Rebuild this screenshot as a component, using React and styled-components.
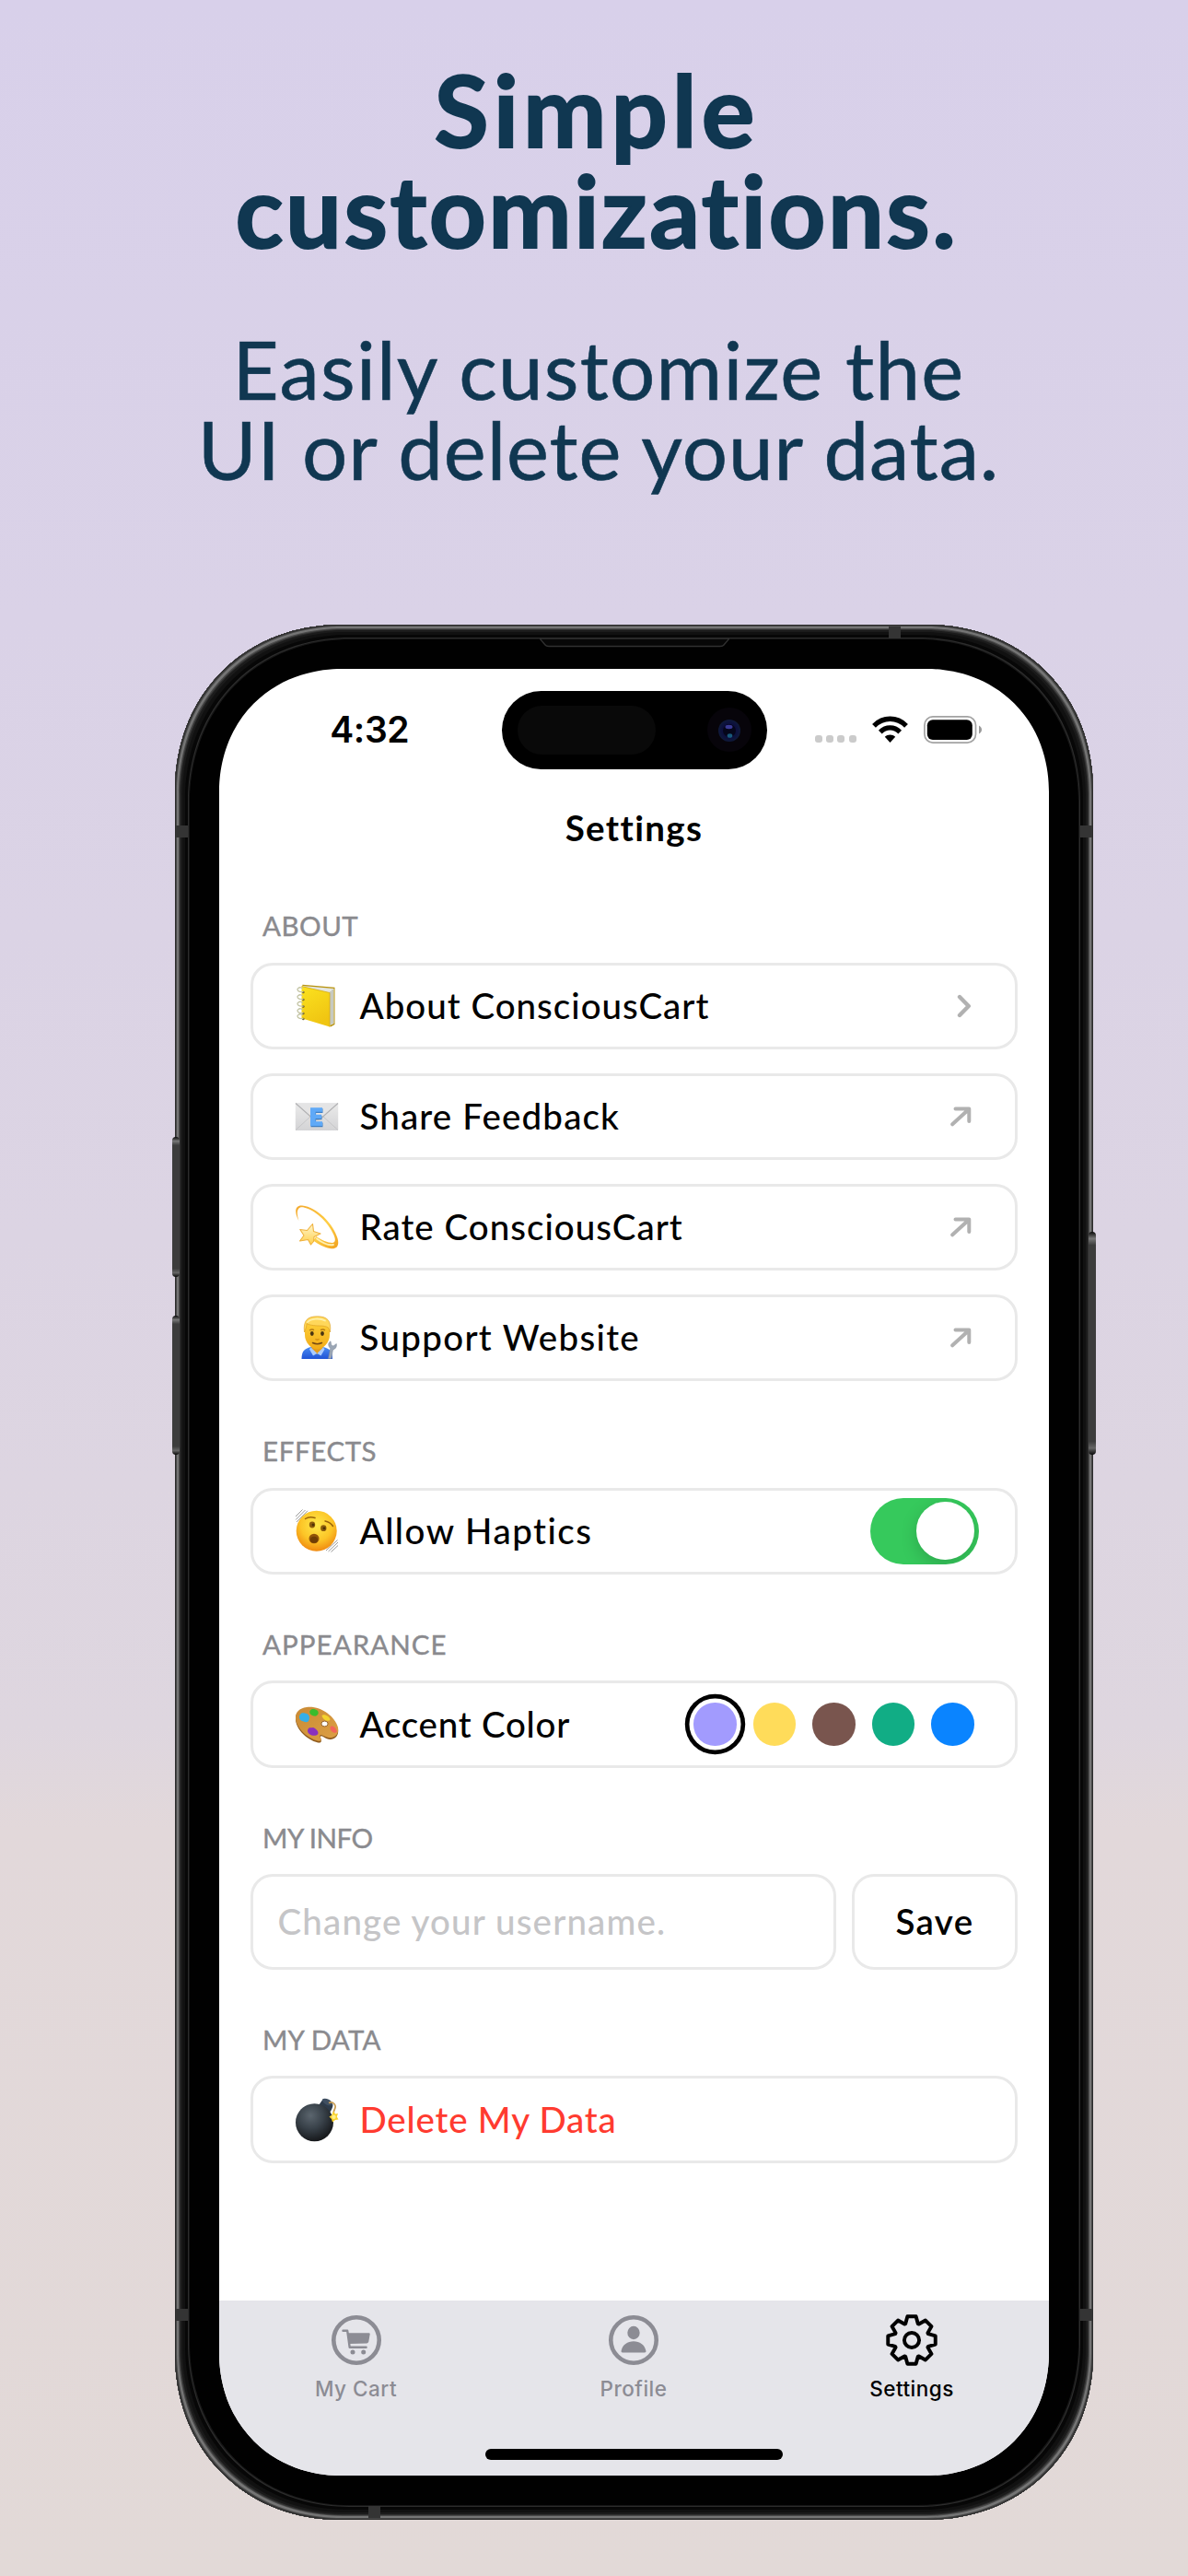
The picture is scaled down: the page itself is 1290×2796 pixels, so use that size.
import React from "react";
import styled, { createGlobalStyle, css } from "styled-components";

const Global = createGlobalStyle`
  * { box-sizing: border-box; }
  body { margin: 0; }
`;

const nunitoLike = css`
  font-family: Lato, "Open Sans", sans-serif;
  font-variant-ligatures: none;
  white-space: nowrap;
`;

/* ---------- page ---------- */

const Page = styled.main`
  width: 1290px;
  height: 2796px;
  overflow: hidden;
  display: flex;
  flex-direction: column;
  background: linear-gradient(180deg, #d8d0ea 0%, #dad2e7 24%, #dcd4e3 48%, #ded6df 67%, #e2d8da 71%, #e2d9d7 100%);
`;

const Promo = styled.header`
  height: 678px;
  padding-top: 63.5px;
  display: flex;
  flex-direction: column;
  align-items: center;
  gap: 75px;
  color: #103751;
`;

const Headline = styled.h1`
  ${nunitoLike}
  margin: 0;
  padding-left: 6px;
  font-size: 108px;
  line-height: 109px;
  font-weight: 700;
  text-align: center;
  -webkit-text-stroke: 2px #103751;
`;

const Subhead = styled.p`
  ${nunitoLike}
  margin: 0;
  padding-left: 10px;
  font-size: 87px;
  line-height: 87px;
  font-weight: 400;
  text-align: center;
  -webkit-text-stroke: 0.6px #103751;
`;

const TextLine = styled.span`
  display: block;
  letter-spacing: ${(p) => p.$track}px;
`;

/* ---------- phone ---------- */

const Phone = styled.section`
  position: relative;
  z-index: 0;
  width: 997px;
  height: 2057px;
  margin-left: 190px;
  padding: 48px;
  border-radius: 180px;
  corner-shape: superellipse(1.06);
  background: #010101;
  box-shadow:
    inset 0 0 0 1px #2d2d2d,
    inset 0 0 0 2px #484848,
    inset 0 0 0 4px #757575,
    inset 0 0 0 5px #4a4a4a,
    inset 0 0 0 6px #303030,
    inset 0 0 0 8px #1b1b1b,
    inset 0 0 0 11px #111111,
    inset 0 0 0 14px #070707,
    inset 0 0 0 15px #2c2c2c,
    inset 0 0 0 16px #161616;
`;

const SideButton = styled.i`
  position: absolute;
  z-index: -1;
  top: ${(p) => p.$top}px;
  ${(p) => (p.$right ? "right: -3px;" : "left: -3px;")}
  width: 8px;
  height: ${(p) => p.$height}px;
  border-radius: 4px;
  background: linear-gradient(180deg, #080808 0, #777 3%, #3c3c3c 6%, #3c3c3c 94%, #666 97%, #080808 100%);
`;

const Antenna = styled.i`
  position: absolute;
  left: ${(p) => p.$x}px;
  top: ${(p) => p.$y}px;
  width: 13px;
  height: 13px;
  background: #343434;
`;

const Speaker = styled.svg`
  position: absolute;
  left: 396px;
  top: 15px;
`;

const Screen = styled.div`
  width: 901px;
  height: 1961px;
  border-radius: 133px;
  corner-shape: superellipse(1.06);
  overflow: hidden;
  background: #fff;
  color: #000;
  display: flex;
  flex-direction: column;
`;

const StatusBar = styled.div`
  height: 131px;
  flex: none;
  display: grid;
  grid-template-columns: 306.5px 288px 1fr;
  align-items: center;
`;

const Clock = styled.time`
  padding-left: 20px;
  text-align: center;
  font: 600 39px/48px Inter, sans-serif;
  letter-spacing: -0.4px;
`;

const Island = styled.div`
  height: 85px;
  margin-top: 1px;
  padding: 0 17px;
  border-radius: 43px;
  background: #000;
  display: flex;
  align-items: center;
  justify-content: space-between;
`;

const Sensor = styled.div`
  width: 150px;
  height: 53px;
  border-radius: 27px;
  background: #090909;
`;

const Indicators = styled.div`
  height: 30px;
  padding-left: 52px;
  display: flex;
  align-items: center;
  gap: 17px;
`;

const Signal = styled.div`
  align-self: flex-end;
  padding-bottom: 1px;
  display: flex;
  gap: 4.4px;
`;

const SignalDot = styled.i`
  width: 8px;
  height: 8px;
  border-radius: 3px;
  background: #cbcbcb;
`;

const NavTitle = styled.h2`
  ${nunitoLike}
  flex: none;
  margin: 0;
  height: 80px;
  font-size: 38.5px;
  line-height: 82px;
  font-weight: 700;
  letter-spacing: 1.35px;
  text-align: center;
`;

const Content = styled.div`
  flex: 1;
  padding: 47px 34px 0;
  display: flex;
  flex-direction: column;
  gap: 55.2px;
`;

const Section = styled.section`
  display: flex;
  flex-direction: column;
  gap: 20.6px;
`;

const SectionLabel = styled.h3`
  ${nunitoLike}
  margin: 0;
  height: 40px;
  padding-left: 13px;
  font-size: 29.5px;
  line-height: 42px;
  font-weight: 400;
  color: #8a8a8e;
  letter-spacing: ${(p) => p.$track}px;
  -webkit-text-stroke: 0.4px #8a8a8e;
`;

const CardStack = styled.div`
  display: flex;
  flex-direction: column;
  gap: 25.8px;
`;

const outlined = css`
  border: 3px solid #e9e9e9;
  border-radius: 24px;
  background: #fff;
`;

const Card = styled.div`
  ${outlined}
  height: 94.2px;
  padding-left: 45px;
  padding-right: ${(p) => p.$end}px;
  display: flex;
  align-items: center;
  gap: 22.5px;
`;

const CardText = styled.span`
  ${nunitoLike}
  flex: 1;
  padding-bottom: 2px;
  font-size: 38.5px;
  line-height: 48px;
  font-weight: 500;
  letter-spacing: ${(p) => p.$track}px;
  color: ${(p) => p.$color || "#000"};
`;

const Toggle = styled.div`
  width: 118px;
  height: 72px;
  padding: 4.7px;
  border-radius: 36px;
  overflow: hidden;
  background: #36c95c;
  display: flex;
  justify-content: flex-end;
`;

const Knob = styled.i`
  width: 62.6px;
  height: 62.6px;
  border-radius: 50%;
  background: #fff;
  box-shadow: 0 6px 18px rgba(0, 0, 0, 0.17);
`;

const Swatches = styled.div`
  display: flex;
  gap: 18px;
`;

const Swatch = styled.i`
  width: 46.5px;
  height: 46.5px;
  border-radius: 50%;
  background: ${(p) => p.$color};
  box-shadow: ${(p) => (p.$active ? "0 0 0 4.5px #fff, 0 0 0 9.2px #000" : "none")};
`;

const InfoRow = styled.div`
  display: flex;
  gap: 17.5px;
`;

const Field = styled.div`
  ${outlined}
  ${nunitoLike}
  width: 635.5px;
  height: 103.2px;
  padding-left: 26.5px;
  font-size: 38.5px;
  line-height: 97px;
  font-weight: 500;
  letter-spacing: 1.15px;
  color: #c5c5c7;
`;

const SaveButton = styled.div`
  ${outlined}
  ${nunitoLike}
  flex: 1;
  height: 103.2px;
  font-size: 38.5px;
  line-height: 96px;
  font-weight: 600;
  letter-spacing: 1.4px;
  text-align: center;
`;

const TabBar = styled.nav`
  flex: none;
  height: 190px;
  background: #e5e5ea;
  display: flex;
  flex-direction: column;
  align-items: center;
`;

const Tabs = styled.div`
  width: 100%;
  height: 161px;
  padding-top: 15px;
  display: grid;
  grid-template-columns: 297px 306px 298px;
  justify-items: center;
`;

const Tab = styled.div`
  display: flex;
  flex-direction: column;
  align-items: center;
  gap: 12px;
  color: ${(p) => (p.$active ? "#000" : "#8c8c94")};
  font: 500 22.5px/25px Inter, sans-serif;
  letter-spacing: 0.5px;
`;

const HomeBar = styled.i`
  width: 323px;
  height: 11.6px;
  border-radius: 6px;
  background: #000;
`;

/* ---------- icons ---------- */

const Glyph = styled.svg.attrs({ viewBox: "0 0 48 48", width: 48, height: 48 })`
  flex: none;
`;

const Notebook = () => (
  <Glyph>
    <defs>
      <linearGradient id="cover" x1="0" y1="0" x2="0.4" y2="1">
        <stop offset="0" stopColor="#fbe21f" />
        <stop offset="1" stopColor="#f0c512" />
      </linearGradient>
    </defs>
    <path d="M8.500 0.800 L43.500 3.800 V44 L39 46.500 L8 4 Z" fill="#b8930f" />
    <path d="M8 2 L42.500 5 V43 L38 45 Z" fill="#e4e6e2" />
    <path d="M39 8 V44 M41 6 V43" stroke="#a3a697" strokeWidth="0.9" />
    <path d="M7.500 2.600 L38 9.500 V46.600 L7.500 37.200 Z" fill="url(#cover)" />
    <path d="M7.500 2.600 L38 9.500 V46.600" fill="none" stroke="#d5ab10" strokeWidth="0.8" />
    {[7, 15, 22.500, 30, 36].map((y) => (
      <g key={y}>
        <circle cx="9.300" cy={y + 2} r="1.300" fill="#6b5a18" />
        <path d={`M9.500 ${y + 1.500} C4 ${y + 2.500} 1.500 ${y - 1} 4 ${y - 2.500} C5.500 ${y - 4} 8 ${y - 3} 8.500 ${y - 2}`} fill="none" stroke="#c3c4a4" strokeWidth="1.300" />
      </g>
    ))}
  </Glyph>
);

const EmailLetter = () => (
  <Glyph>
    <defs>
      <linearGradient id="paper" x1="0" y1="0" x2="0" y2="1">
        <stop offset="0" stopColor="#ebebeb" />
        <stop offset="1" stopColor="#d3d3d5" />
      </linearGradient>
    </defs>
    <rect x="0.800" y="9" width="46.400" height="30" rx="0.800" fill="url(#paper)" />
    <path d="M1 38.600 L17 24 M47 38.600 L31 24" stroke="#c3c3c5" strokeWidth="0.900" />
    <path d="M1 9.500 L19 25.500 Q24 29 29 25.500 L47 9.500" fill="#e4e4e5" stroke="#b1b1b3" strokeWidth="1.100" />
    <path d="M17 14.500 H30 V19.300 H22.600 V22 H29 V26.500 H22.600 V29.700 H30 V34.500 H17 Z" fill="#3e7fc4" transform="translate(0.500 0.700)" />
    <path d="M17 14.300 H30 V18.800 H22.600 V21.800 H29 V26.100 H22.600 V29.300 H30 V33.900 H17 Z" fill="#5fa9f7" />
  </Glyph>
);

const DizzyStar = () => (
  <Glyph>
    <defs>
      <linearGradient id="trail" x1="0" y1="0" x2="1" y2="1">
        <stop offset="0" stopColor="#f3a92f" />
        <stop offset="0.600" stopColor="#ffcf45" />
        <stop offset="1" stopColor="#f0a01e" />
      </linearGradient>
      <linearGradient id="star" x1="0" y1="0" x2="0" y2="1">
        <stop offset="0" stopColor="#fff7cf" />
        <stop offset="1" stopColor="#ffcf4a" />
      </linearGradient>
    </defs>
    <path d="M4.500 17 C-1 7 0.500 0 8 0.500 C24 2 42 20 46.500 36 C49 45 45 48.500 38 47 C32 46 25 42 20 38.500 L23.500 34 C29 38 36 41 40.500 41 C44.500 41 44.500 37 42.500 32.500 C36 18 22 5 9 2.300 C2.500 1.500 1.500 8 4.500 17 Z" fill="url(#trail)" />
    <path d="M24 36.500 C30 41 37 44 42 43" fill="none" stroke="#fff0b0" strokeWidth="1.800" strokeLinecap="round" />
    <path d="M19.500 20.500 L20.500 28.500 L28 31 L21 34.500 L20.500 39.500 L17.500 43 L14.500 37.500 L5.500 39 L10 33 L5.800 26.500 L13.500 27.500 Z" fill="url(#star)" stroke="#efb13c" strokeWidth="1.100" strokeLinejoin="round" />
  </Glyph>
);

const Mechanic = () => (
  <Glyph>
    <defs>
      <linearGradient id="skin" x1="0" y1="0" x2="0" y2="1">
        <stop offset="0" stopColor="#ffd43c" />
        <stop offset="1" stopColor="#f2ac18" />
      </linearGradient>
      <linearGradient id="shirt" x1="0" y1="0" x2="0" y2="1">
        <stop offset="0" stopColor="#4b8df2" />
        <stop offset="1" stopColor="#1f53d6" />
      </linearGradient>
    </defs>
    <path d="M7.500 47 C7.500 38 11 35.500 18 34 H30 C38 35.500 41 38 41 47 Z" fill="url(#shirt)" />
    <path d="M18.500 33 H30 V36 L24.300 42 L18.500 36 Z" fill="#e39c1c" />
    <path d="M17.500 34.500 L24.300 41 L20 43.500 L16 36.500 Z M31 34.500 L24.300 41 L28.500 43.500 L32.500 36.500 Z" fill="#a9cbff" />
    <path d="M11 14 C11 4 17 3 24.500 3 C32 3 38 4 38 14 V21 C38 29 31 36.500 24.500 36.500 C18 36.500 11 29 11 21 Z" fill="url(#skin)" />
    <path d="M10.500 18 C9 5 14 0.800 24.500 0.800 C35 0.800 40 5 38.500 18 L36.500 13 C34 11.500 31 11 27 11 C21 11 15 10 13 8.500 C13 12 12 14 10.500 18 Z" fill="#ffd75a" stroke="#d89b22" strokeWidth="0.600" />
    <path d="M14 7 C17 3.500 27 2 33 5.500" fill="none" stroke="#fff0a6" strokeWidth="1.800" strokeLinecap="round" />
    <path d="M16 16 q3 -1.800 5 -0.300 M28 15.700 q3 -1.500 5 0.300" fill="none" stroke="#b67d14" strokeWidth="1.300" />
    <ellipse cx="18.800" cy="19.500" rx="1.900" ry="2.400" fill="#4a3512" />
    <ellipse cx="30" cy="19.500" rx="1.900" ry="2.400" fill="#4a3512" />
    <path d="M22.500 25.500 q2 1.300 4 0" fill="none" stroke="#c88612" strokeWidth="1.200" />
    <path d="M19.500 29.500 q5 2.500 10 0" fill="none" stroke="#774b13" strokeWidth="1.500" strokeLinecap="round" />
    <path d="M36.500 46.500 L38.700 35.500 C36 33 36 29.500 39 27.800 L39.800 32 L42 33 L45.300 30.500 C46 34 44 36.500 41.500 37 L39.700 46.500 Z" fill="#9ba6b5" stroke="#7d8898" strokeWidth="0.500" />
  </Glyph>
);

const ShakingFace = () => (
  <Glyph>
    <defs>
      <radialGradient id="face" cx="0.500" cy="0.350" r="0.650">
        <stop offset="0" stopColor="#ffe94a" />
        <stop offset="0.600" stopColor="#fcc527" />
        <stop offset="1" stopColor="#f08a10" />
      </radialGradient>
    </defs>
    <path d="M1 8 L8.500 0.500 M1.200 11.500 L11.500 1 M2 14 L14 1.800 M34 45 L46.500 33.500 M36.500 46 L47 36 M39.500 46.500 L47 39.500" stroke="#9b9b9b" strokeWidth="1" />
    <circle cx="23.700" cy="23.700" r="22" fill="url(#face)" />
    <path d="M11.500 10.500 Q16 7.500 22 9.500 M33 13 Q38.500 14 41.500 18.500" fill="none" stroke="#99640a" strokeWidth="1.500" strokeLinecap="round" />
    <ellipse cx="19" cy="17" rx="3.200" ry="3.400" fill="#8d5d0c" />
    <ellipse cx="31.300" cy="20.700" rx="3.200" ry="3.400" fill="#8d5d0c" />
    <circle cx="20" cy="17" r="1.500" fill="#4d3205" />
    <circle cx="32" cy="20.700" r="1.500" fill="#4d3205" />
    <ellipse cx="21" cy="32" rx="5.500" ry="5.300" fill="#915408" />
    <ellipse cx="21" cy="33.300" rx="4" ry="3.500" fill="#6f3d05" />
  </Glyph>
);

const PaintPalette = () => (
  <Glyph>
    <defs>
      <linearGradient id="wood" x1="0" y1="0" x2="1" y2="1">
        <stop offset="0" stopColor="#c98a35" />
        <stop offset="1" stopColor="#dda044" />
      </linearGradient>
    </defs>
    <path d="M13 5.500 C27 3 44 15 47 28 C48.500 36 42 41 35 38.500 C31 37 28.500 34 28 36.500 C27.800 38.500 30 40.500 28 42.500 C24 44.500 5 35 1.500 21 C-0.500 13 3 7 13 5.500 Z" fill="#8f5a1c" transform="translate(0 0.800)" />
    <path d="M13 5 C27 3 44 14.500 47 27 C48.500 35 42 40 35 37.500 C31 36 27.500 33.500 27.500 36 C27.300 38 30 39.500 28 41.500 C24 43.500 5 34 1.500 20 C-0.500 12.500 3 6.500 13 5 Z" fill="url(#wood)" />
    <ellipse cx="32.500" cy="23" rx="3.600" ry="2.900" fill="#fff" stroke="#8a571d" strokeWidth="0.900" />
    <path d="M6 13 C8 10 11 12 13 12 C16 13 17 17 15 20 C12 23 10 20 8 20 C5 19 4 15 6 13 Z" fill="#35aee6" />
    <path d="M16.500 9 C18 6 22 6.500 24.500 8.500 C27.500 11 24.500 15.500 21 14.500 C18 14 15.500 12 16.500 9 Z" fill="#39bc2c" />
    <path d="M29.500 14 C32 12 38 15 38.500 18.500 C37 21.500 30.500 19 29.500 14 Z" fill="#f4d32e" />
    <path d="M38.500 27 C40 23.500 45 27 46 31.500 C44 35 38 31 38.500 27 Z" fill="#f3655a" />
    <path d="M14 30 C15 26 18 28 20 27 C23 28 27 32 25 34.500 C22 37.500 13.500 35 14 30 Z" fill="#8a30be" />
  </Glyph>
);

const Bomb = () => (
  <Glyph>
    <defs>
      <radialGradient id="shell" cx="0.400" cy="0.320" r="0.680">
        <stop offset="0" stopColor="#5b656e" />
        <stop offset="0.500" stopColor="#39424a" />
        <stop offset="1" stopColor="#17191c" />
      </radialGradient>
    </defs>
    <path d="M31 1 L41 6.500 C42.500 8 40 14 37 17 L25 9.500 Z" fill="#2d3b4a" />
    <ellipse cx="35.500" cy="4.500" rx="6" ry="3" transform="rotate(28 35.500 4.500)" fill="#3f4f61" />
    <circle cx="21.500" cy="26.700" r="20.500" fill="url(#shell)" />
    <path d="M37 5.500 C42 3.500 45.500 8 43.500 12 C42.500 14 42 16 42.500 18" fill="none" stroke="#c79d54" strokeWidth="1.700" />
    <path d="M42 14.500 L44 17.500 L47 17 L45.800 20.500 L47.500 23.500 L44 24 L41 26.500 L40 23 L37.500 20.500 L40.500 18.500 Z" fill="#f9d22c" />
    <circle cx="42.500" cy="20.700" r="2.200" fill="#fff08a" />
  </Glyph>
);

const Chevron = () => (
  <svg width="16" height="26" viewBox="0 0 16 26" fill="none" stroke="#b1b1b1" strokeWidth="4.400" strokeLinecap="round" strokeLinejoin="round">
    <path d="M3 3 L12.800 13 L3 23" />
  </svg>
);

const ArrowOut = () => (
  <svg width="23" height="22" viewBox="0 0 23 22" fill="none" stroke="#b1b1b1" strokeWidth="4" strokeLinecap="round" strokeLinejoin="round">
    <path d="M2.200 19.300 L20 3 M5.500 2.600 H20.300 V16" />
  </svg>
);

const Wifi = () => (
  <svg width="39" height="30" viewBox="0 0 39 30">
    <path d="M2 11.200 C12 1.200 27 1.200 37 11.200" fill="none" stroke="#000" strokeWidth="5.400" transform="translate(0 -0.400)" />
    <path d="M8.800 18 C15 11.800 24 11.800 30.200 18" fill="none" stroke="#000" strokeWidth="5.200" transform="translate(0 -0.400)" />
    <path d="M13.800 22.800 C17 19.600 22 19.600 25.200 22.800 L19.500 29 Z" />
  </svg>
);

const Battery = () => (
  <svg width="64" height="30" viewBox="0 0 64 30">
    <rect x="0.900" y="0.900" width="55.600" height="28.200" rx="9" fill="none" stroke="#a3a3a3" strokeWidth="1.700" />
    <rect x="3.800" y="4.300" width="49" height="21.600" rx="6" />
    <path d="M60 10.500 C64 12.500 64 17.500 60 19.500 Z" fill="#9b9b9b" />
  </svg>
);

const Camera = () => (
  <svg width="48" height="48" viewBox="0 0 48 48">
    <defs>
      <radialGradient id="lens">
        <stop offset="0" stopColor="#15154e" />
        <stop offset="0.650" stopColor="#0c0f3c" />
        <stop offset="1" stopColor="#0f1a3a" />
      </radialGradient>
    </defs>
    <circle cx="24" cy="24" r="24" fill="#07040a" />
    <circle cx="24" cy="25" r="12" fill="url(#lens)" />
    <circle cx="24" cy="25" r="7" fill="#05061a" />
    <ellipse cx="23.500" cy="21" rx="4" ry="2.200" fill="#3a3a94" />
    <ellipse cx="24.500" cy="30.500" rx="2.800" ry="2.300" fill="#185a7b" />
  </svg>
);

const CartIcon = () => (
  <svg width="56" height="56" viewBox="-28 -28 56 56" fill="currentColor">
    <circle r="24.700" fill="none" stroke="currentColor" strokeWidth="4.600" />
    <path d="M-14.500 -10.200 H-9.800 L-7.300 7.800 H10.600" fill="none" stroke="currentColor" strokeWidth="2.400" strokeLinecap="round" strokeLinejoin="round" />
    <path d="M-9.400 -7.800 H13.600 Q14.900 -7.800 14.700 -6.500 L13.300 1.600 Q13 3.200 11.400 3.400 L-7.800 4 Z" />
    <circle cx="-4" cy="13" r="2.500" />
    <circle cx="7.700" cy="13" r="2.500" />
  </svg>
);

const ProfileIcon = () => (
  <svg width="56" height="56" viewBox="-28 -28 56 56" fill="currentColor">
    <circle r="24.700" fill="none" stroke="currentColor" strokeWidth="4.600" />
    <ellipse cy="-8" rx="6.700" ry="7.200" />
    <path d="M-12 13.600 Q-13.900 13.600 -13.400 11.500 C-12 5 -6.500 1.300 0 1.300 C6.500 1.300 12 5 13.400 11.500 Q13.900 13.600 12 13.600 Z" />
  </svg>
);

const gearOutline = Array.from({ length: 8 }, (_, i) => {
  const turn = (i * Math.PI) / 4;
  return [[-6.900, -18.200], [-4.700, -26.200], [4.700, -26.200], [6.900, -18.200]]
    .map(([x, y]) => {
      const px = x * Math.cos(turn) - y * Math.sin(turn);
      const py = x * Math.sin(turn) + y * Math.cos(turn);
      return `${px.toFixed(2)} ${py.toFixed(2)}`;
    })
    .join(" L");
}).join(" L");

const GearIcon = () => (
  <svg width="58" height="56" viewBox="-29 -28.500 58 57" fill="none" stroke="currentColor" strokeWidth="4" strokeLinejoin="round">
    <path d={`M${gearOutline} Z`} />
    <circle r="8.200" />
  </svg>
);

/* ---------- data ---------- */

const aboutRows = [
  { icon: <Notebook />, text: "About ConsciousCart", track: 1, end: <Chevron /> },
  { icon: <EmailLetter />, text: "Share Feedback", track: 1.15, end: <ArrowOut /> },
  { icon: <DizzyStar />, text: "Rate ConsciousCart", track: 1.02, end: <ArrowOut /> },
  { icon: <Mechanic />, text: "Support Website", track: 1.32, end: <ArrowOut /> },
];

const accents = ["#a29bfe", "#ffdc5a", "#79554e", "#11ad85", "#0a84ff"];

export default function App() {
  return (
    <Page>
      <Global />
      <Promo>
        <Headline>
          <TextLine $track={5}>Simple</TextLine>
          <TextLine $track={2.5}>customizations.</TextLine>
        </Headline>
        <Subhead>
          <TextLine $track={1.25}>Easily customize the</TextLine>
          <TextLine $track={0.9}>UI or delete your data.</TextLine>
        </Subhead>
      </Promo>

      <Phone>
        <SideButton $top={556} $height={152} />
        <SideButton $top={750} $height={151} />
        <SideButton $right $top={659} $height={242} />
        <Antenna $x={775} $y={2} />
        <Antenna $x={1} $y={218} />
        <Antenna $x={983} $y={218} />
        <Antenna $x={1} $y={1828} />
        <Antenna $x={983} $y={1828} />
        <Antenna $x={210} $y={2042} />
        <Speaker width="206" height="11" viewBox="0 0 206 11">
          <path d="M0 0 L6 7 Q7 8.500 10 8.500 H196 Q199 8.500 200 7 L206 0 Z" fill="#070707" stroke="#303030" strokeWidth="1.400" />
        </Speaker>

        <Screen>
          <StatusBar>
            <Clock>4:32</Clock>
            <Island>
              <Sensor />
              <Camera />
            </Island>
            <Indicators>
              <Signal>
                <SignalDot />
                <SignalDot />
                <SignalDot />
                <SignalDot />
              </Signal>
              <Wifi />
              <Battery />
            </Indicators>
          </StatusBar>
          <NavTitle>Settings</NavTitle>

          <Content>
            <Section>
              <SectionLabel $track={0.5}>ABOUT</SectionLabel>
              <CardStack>
                {aboutRows.map((row) => (
                  <Card key={row.text} $end={47}>
                    {row.icon}
                    <CardText $track={row.track}>{row.text}</CardText>
                    {row.end}
                  </Card>
                ))}
              </CardStack>
            </Section>

            <Section>
              <SectionLabel $track={0.6}>EFFECTS</SectionLabel>
              <Card $end={39.5}>
                <ShakingFace />
                <CardText $track={1.5}>Allow Haptics</CardText>
                <Toggle>
                  <Knob />
                </Toggle>
              </Card>
            </Section>

            <Section>
              <SectionLabel $track={1.05}>APPEARANCE</SectionLabel>
              <Card $end={44.2}>
                <PaintPalette />
                <CardText $track={0.75}>Accent Color</CardText>
                <Swatches>
                  {accents.map((color, i) => (
                    <Swatch key={color} $color={color} $active={i === 0} />
                  ))}
                </Swatches>
              </Card>
            </Section>

            <Section>
              <SectionLabel $track={-0.5}>MY INFO</SectionLabel>
              <InfoRow>
                <Field>Change your username.</Field>
                <SaveButton>Save</SaveButton>
              </InfoRow>
            </Section>

            <Section>
              <SectionLabel $track={0.2}>MY DATA</SectionLabel>
              <Card $end={46}>
                <Bomb />
                <CardText $track={0.8} $color="#ff3b30">Delete My Data</CardText>
              </Card>
            </Section>
          </Content>

          <TabBar>
            <Tabs>
              <Tab>
                <CartIcon />
                My Cart
              </Tab>
              <Tab>
                <ProfileIcon />
                Profile
              </Tab>
              <Tab $active>
                <GearIcon />
                Settings
              </Tab>
            </Tabs>
            <HomeBar />
          </TabBar>
        </Screen>
      </Phone>
    </Page>
  );
}
